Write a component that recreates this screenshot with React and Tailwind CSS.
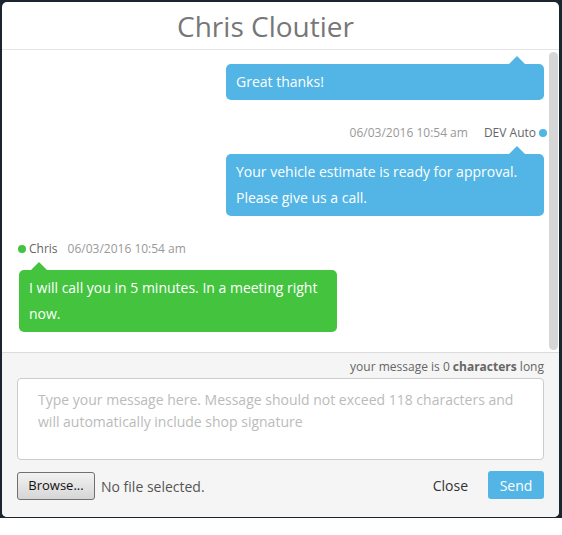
import React from "react";

const font = { fontFamily: '"Open Sans", "Noto Sans", sans-serif' };

function ArrowUp({ color, className }) {
  return (
    <svg width="18" height="9" viewBox="0 0 18 9" className={className}>
      <path d="M0 9 L9 0 L18 9 Z" fill={color} />
    </svg>
  );
}

export default function App() {
  return (
    <div className="w-[562px] h-[535px] bg-white" style={font}>
      <div className="h-[518px] bg-[#1b2530] pl-[2px] pt-[2px] pr-[3px] pb-[1px]">
        <div className="h-full bg-white rounded-[5px] flex flex-col overflow-hidden">
          {/* header */}
          <div className="h-[48px] border-b border-[#e5e5e5] flex items-center justify-center pr-[30px]">
            <h1 className="text-[28px] text-[#777] leading-none">Chris Cloutier</h1>
          </div>
          {/* messages */}
          <div className="h-[302px] flex relative">
            <div className="flex-1 flex flex-col pl-[17px] pr-[5px]">
              <div className="flex flex-col items-end pt-[6px]">
                <ArrowUp color="#52b5e5" className="mr-[18px] -mb-px" />
                <div className="w-[318px] bg-[#52b5e5] text-white text-[14px] leading-[26px] rounded-[5px] px-[10px] pt-[5px] pb-[5px]">
                  Great thanks!
                </div>
              </div>
              <div className="flex flex-col items-end mt-[25px]">
                <div className="flex items-center text-[12px] leading-[16px]">
                  <span className="text-[#999]">06/03/2016 10:54 am</span>
                  <span className="text-[#666] ml-[16px]">DEV Auto</span>
                  <span className="w-[8px] h-[8px] rounded-full bg-[#52b5e5] ml-[3px] -mr-[3px]" />
                </div>
                <ArrowUp color="#52b5e5" className="mr-[18px] mt-[5px] -mb-px" />
                <div className="w-[318px] bg-[#52b5e5] text-white text-[14px] leading-[26px] rounded-[5px] px-[10px] pt-[5px] pb-[5px]">
                  Your vehicle estimate is ready for approval. Please give us a call.
                </div>
              </div>
              <div className="flex flex-col items-start mt-[25px]">
                <div className="flex items-center text-[12px] leading-[16px] -ml-px">
                  <span className="w-[8px] h-[8px] rounded-full bg-[#44c33f] mr-[3px]" />
                  <span className="text-[#666]">Chris</span>
                  <span className="text-[#999] ml-[10px]">06/03/2016 10:54 am</span>
                </div>
                <ArrowUp color="#44c33f" className="ml-[11px] mt-[5px] -mb-px" />
                <div className="w-[318px] bg-[#44c33f] text-white text-[14px] leading-[26px] rounded-[5px] px-[10px] pt-[5px] pb-[5px]">
                  I will call you in 5 minutes. In a meeting right now.
                </div>
              </div>
            </div>
            <div className="w-[10px] flex justify-start pt-[2px] pb-[2px]">
              <div className="w-[9px] h-full bg-[#d6d6d6] rounded-full" />
            </div>
          </div>
          {/* footer */}
          <div className="flex-1 bg-[#f5f5f5] border-t border-[#dcdcdc] px-[15px]">
            <div className="text-right text-[12px] text-[#666] leading-[16px] pt-[6px]">
              your message is 0 <span className="font-bold">characters</span> long
            </div>
            <div className="mt-[3px] h-[82px] bg-white border border-[#ccc] rounded-[4px] px-[20px] pt-[10px] text-[14px] leading-[22px] text-[#bbb]">
              Type your message here. Message should not exceed 118 characters and will automatically include shop signature
            </div>
            <div className="flex items-center mt-[11px] h-[28px]">
              <button className="w-[78px] h-[28px] border border-[#707070] rounded-[3px] bg-gradient-to-b from-[#f2f2f2] to-[#d6d6d6] text-[13px] text-[#111] mt-[2px]">
                Browse...
              </button>
              <span className="ml-[6px] text-[14px] text-[#555] mt-[2px]">No file selected.</span>
              <span className="ml-auto text-[14px] text-[#333] mr-[20px]">Close</span>
              <button className="w-[56px] h-[28px] bg-[#52b5e5] text-white text-[14px] rounded-[3px]">
                Send
              </button>
            </div>
          </div>
        </div>
      </div>
    </div>
  );
}
